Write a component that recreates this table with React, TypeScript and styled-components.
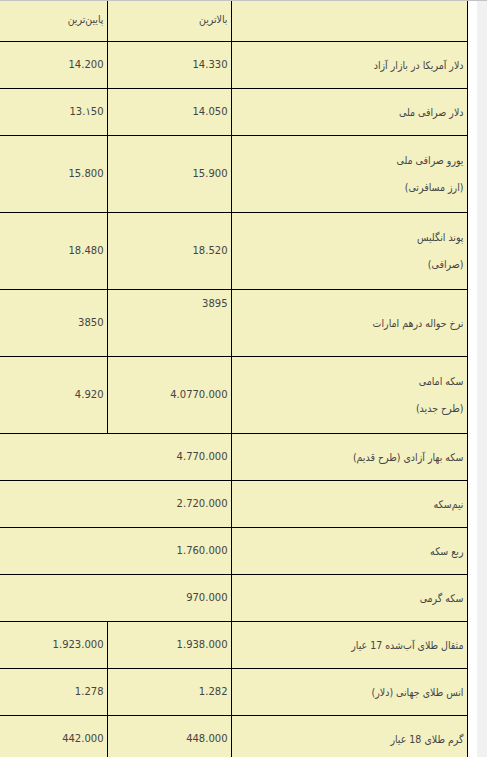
import styled, {createGlobalStyle} from 'styled-components';

const GlobalStyle = createGlobalStyle`
  html, body {
    margin: 0;
    padding: 0;
    background: #ffffff;
  }
`;

type Rate = {
  label: string[];
  high: string;
  low?: string;
  height: number;
  highTop?: boolean;
};

const rates: Rate[] = [
  {label: ['دلار آمریکا در بازار آزاد'], high: '14.330', low: '14.200', height: 47},
  {label: ['دلار صرافی ملی'], high: '14.050', low: '13.۱50', height: 47},
  {label: ['یورو صرافی ملی', '(ارز مسافرتی)'], high: '15.900', low: '15.800', height: 77},
  {label: ['پوند انگلیس', '(صرافی)'], high: '18.520', low: '18.480', height: 77},
  {label: ['نرخ حواله درهم امارات'], high: '3895', low: '3850', height: 67, highTop: true},
  {label: ['سکه امامی', '(طرح جدید)'], high: '4.0770.000', low: '4.920', height: 77},
  {label: ['سکه بهار آزادی (طرح قدیم)'], high: '4.770.000', height: 47},
  {label: ['نیم‌سکه'], high: '2.720.000', height: 47},
  {label: ['ربع سکه'], high: '1.760.000', height: 47},
  {label: ['سکه گرمی'], high: '970.000', height: 47},
  {label: ['مثقال طلای آب‌شده 17 عیار'], high: '1.938.000', low: '1.923.000', height: 47},
  {label: ['انس طلای جهانی (دلار)'], high: '1.282', low: '1.278', height: 47},
  {label: ['گرم طلای 18 عیار'], high: '448.000', low: '442.000', height: 47},
];

export default function App() {
  return (
    <>
      <GlobalStyle />
      <Page>
        <Main>
          <Table dir="rtl">
            <colgroup>
              <col style={{width: 236}} />
              <col style={{width: 124}} />
              <col style={{width: 107}} />
            </colgroup>
            <tbody>
              <Row $h={40} $head>
                <Cell />
                <Cell $text>بالاترین</Cell>
                <Cell $text>پایین‌ترین</Cell>
              </Row>
              {rates.map((r) => (
                <Row key={r.label[0]} $h={r.height}>
                  <Cell $text>
                    {r.label.length > 1
                      ? r.label.map((l) => <Line key={l}>{l}</Line>)
                      : r.label[0]}
                  </Cell>
                  {r.low ? (
                    <>
                      <Cell $top={r.highTop}>{r.highTop ? <Line>{r.high}</Line> : r.high}</Cell>
                      <Cell>{r.low}</Cell>
                    </>
                  ) : (
                    <Cell colSpan={2}>{r.high}</Cell>
                  )}
                </Row>
              ))}
            </tbody>
          </Table>
        </Main>
        <Side />
      </Page>
    </>
  );
}

const Page = styled.div`
  display: flex;
  height: 757px;
  overflow: hidden;
  border-top: 1px solid #c4c4c4;
  box-sizing: border-box;
`;

const Main = styled.div`
  width: 477px;
  flex: none;
  background: #ffffff;
`;

const Side = styled.div`
  flex: 1;
  background: #f1f1f1;
`;

const Table = styled.table`
  width: 467px;
  border-collapse: collapse;
  table-layout: fixed;
  background: #f3f1c1;
  color: #444444;
  font-family: Tahoma, 'DejaVu Sans', sans-serif;
  font-size: 10px;
`;

const Row = styled.tr<{$h: number; $head?: boolean}>`
  height: ${(p) => p.$h}px;

  & > td {
    border-top: ${(p) => (p.$head ? 'none' : '1px solid #000')};
    padding-bottom: ${(p) => (p.$head ? '4px' : '0')};
  }
`;

const Cell = styled.td<{$top?: boolean; $text?: boolean}>`
  border: 1px solid #000;
  padding: 0 3px;
  text-align: right;
  vertical-align: ${(p) => (p.$top ? 'top' : 'middle')};
  white-space: nowrap;
  font-family: ${(p) =>
    p.$text ? "'DejaVu Sans Condensed', 'DejaVu Sans', sans-serif" : "Tahoma, 'DejaVu Sans', sans-serif"};
  font-size: ${(p) => (p.$text ? '10.5px' : '10px')};

  &:last-child {
    border-left: none;
  }
`;

const Line = styled.div`
  line-height: 27px;
`;
